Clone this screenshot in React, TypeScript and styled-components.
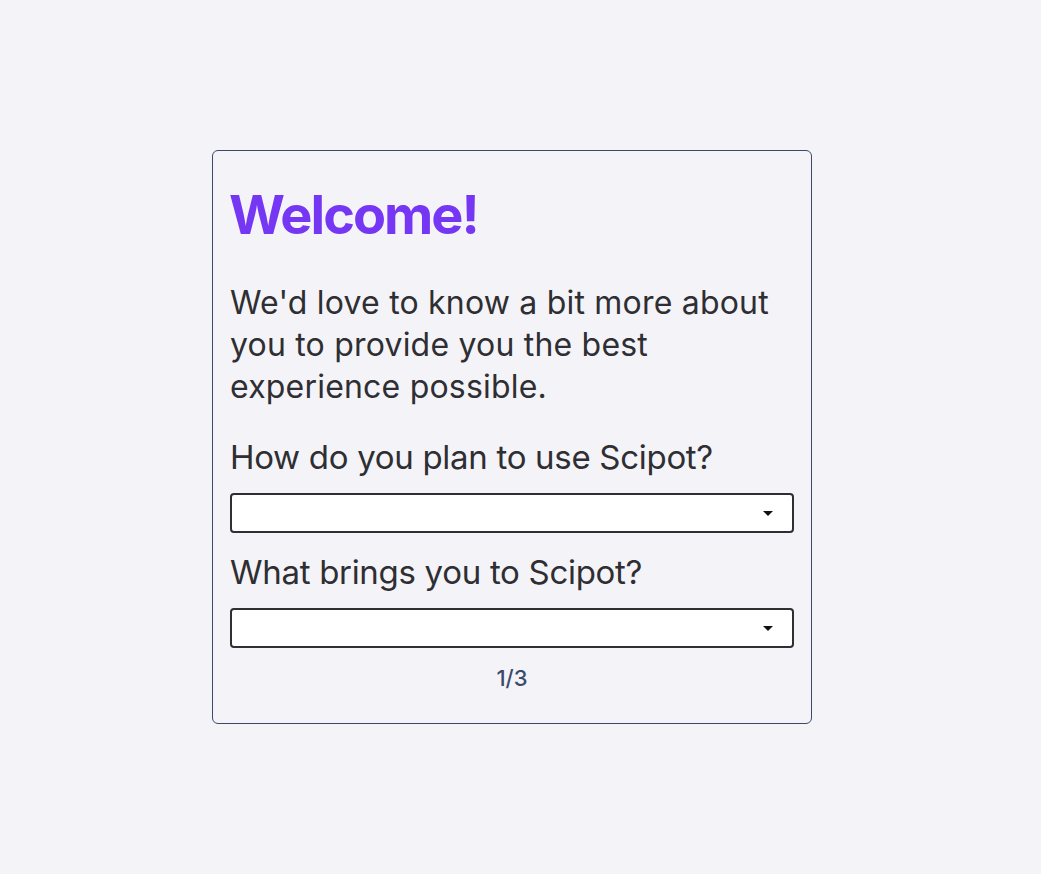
import { createGlobalStyle, styled } from 'styled-components';

const GlobalStyle = createGlobalStyle`
  html, body {
    margin: 0;
    padding: 0;
    background-color: #f4f4f8;
    font-family: Inter, 'Noto Sans', sans-serif;
  }
  * {
    box-sizing: border-box;
  }
`;

export const Page = styled.div`
  width: 100%;
  min-height: 2770px;
`;

export const Screen = styled.div`
  width: 100%;
  height: 100vh;
  padding-right: 17px;
  display: flex;
  align-items: center;
  justify-content: center;
`;

export const Card = styled.div`
  width: 600px;
  padding: 22px 17px 32px;
  display: flex;
  flex-direction: column;
  border: 1px solid #3b4a6b;
  border-radius: 6px;
`;

export const Title = styled.h1`
  margin: 10px 0 35px -1px;
  font-size: 54px;
  font-weight: 700;
  letter-spacing: -2px;
  line-height: 1.2;
  color: #7637f5;
`;

export const Intro = styled.p`
  margin: 0 0 10px;
  font-size: 32px;
  font-weight: 400;
  line-height: 42px;
  letter-spacing: 0.2px;
  color: #2e2e33;
`;

export const Question = styled.label`
  display: block;
  margin: 19px 0 16px;
  font-size: 33px;
  font-weight: 400;
  line-height: 40px;
  letter-spacing: -0.3px;
  color: #2e2e33;
`;

export const SelectBox = styled.div`
  height: 40px;
  display: flex;
  align-items: center;
  justify-content: flex-end;
  padding-right: 19px;
  background-color: #ffffff;
  border: 2px solid #2e2e33;
  border-radius: 4px;
`;

export const Caret = styled.span`
  width: 0;
  height: 0;
  border-left: 5px solid transparent;
  border-right: 5px solid transparent;
  border-top: 5px solid #111;
`;

export const Step = styled.div`
  margin-top: 17px;
  text-align: center;
  font-size: 22px;
  font-weight: 500;
  color: #3b4a6b;
`;

const questions = ['How do you plan to use Scipot?', 'What brings you to Scipot?'];

function App() {
  return (
    <Page>
      <GlobalStyle />
      <Screen>
        <Card>
          <Title>Welcome!</Title>
          <Intro>
            We'd love to know a bit more about you to provide you the best experience possible.
          </Intro>
          {questions.map((q) => (
            <div key={q}>
              <Question>{q}</Question>
              <SelectBox>
                <Caret />
              </SelectBox>
            </div>
          ))}
          <Step>1/3</Step>
        </Card>
      </Screen>
    </Page>
  );
}

export default App;
